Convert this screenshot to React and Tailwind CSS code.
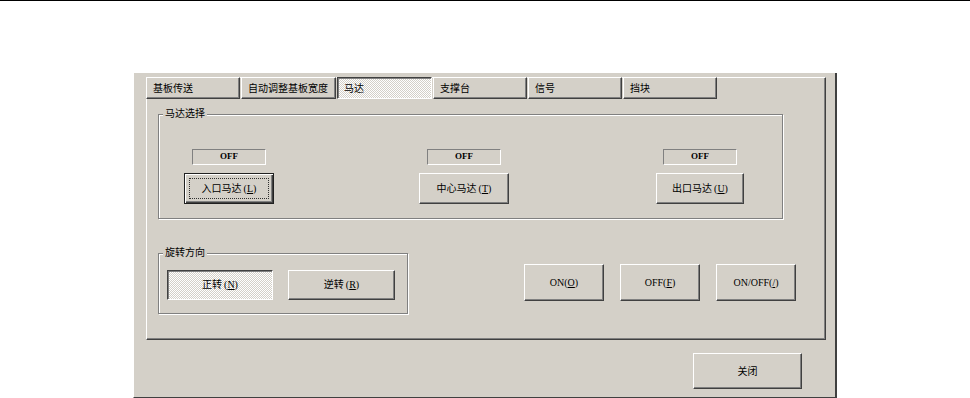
import React from 'react'

const raised =
  'border border-t-white border-l-white border-r-[#404040] border-b-[#404040] shadow-[inset_-1px_-1px_0_#808080]'
const sunken =
  'border border-t-[#404040] border-l-[#404040] border-r-white border-b-white shadow-[inset_1px_1px_0_#808080]'
const dither =
  'bg-[repeating-conic-gradient(#ffffff_0%_25%,#d4d0c8_0%_50%)] bg-[length:2px_2px]'
const font = "font-['Liberation_Serif','Noto_Sans_CJK_SC',serif]"

const tabs = [
  { label: '基板传送', w: 'w-[94px]' },
  { label: '自动调整基板宽度', w: 'w-[95px]' },
  { label: '马达', w: 'w-[95px]', active: true },
  { label: '支撑台', w: 'w-[94px]' },
  { label: '信号', w: 'w-[94px]' },
  { label: '挡块', w: 'w-[94px]' },
]

const Label = ({ text, mn }) => (
  <span className="text-[10px] leading-[12px] text-black whitespace-nowrap">
    {text}
    <span className="ml-[2px]">
      (<u>{mn}</u>)
    </span>
  </span>
)

const GroupBox = ({ title, className, children }) => (
  <div
    className={`relative border border-[#808080] shadow-[inset_1px_1px_0_#ffffff,1px_1px_0_#ffffff] ${className}`}
  >
    <span className="absolute -top-[7px] left-[4px] bg-[#d4d0c8] px-[2px] text-[10px] leading-[12px] text-black">
      {title}
    </span>
    {children}
  </div>
)

const MotorColumn = ({ text, mn, w, focused }) => (
  <div className="flex flex-col items-center">
    <div className="w-[74px] h-[16px] flex items-start justify-center pt-[2px] border border-t-[#808080] border-l-[#808080] border-r-white border-b-white text-[9px] font-bold leading-none">
      OFF
    </div>
    <button
      className={`relative mt-[8px] ${w} h-[31px] flex items-center justify-center ${
        focused
          ? 'border border-[#202020] shadow-[inset_1px_1px_0_#ffffff,inset_-1px_-1px_0_#404040,inset_-2px_-2px_0_#808080]'
          : raised
      }`}
    >
      {focused && (
        <span className="absolute inset-[4px] border border-dotted border-[#303030]" />
      )}
      <Label text={text} mn={mn} />
    </button>
  </div>
)

export default function App() {
  return (
    <div className={`w-[970px] h-[398px] bg-white overflow-hidden border-t border-black ${font}`}>
      <div className="ml-[133px] mt-[72px] w-[704px] h-[325px] bg-[#d4d0c8] border-l border-l-white border-r-2 border-r-[#404040] border-b border-b-[#404040] pt-[4px]">
        {/* tab control */}
        <div className="ml-[12px] w-[680px] h-[263px] border border-t-white border-l-white border-r-[#404040] border-b-[#404040] shadow-[inset_-1px_-1px_0_#808080]">
          <div className="flex gap-px h-[22px] -mt-px -ml-px">
            {tabs.map((t) => (
              <div
                key={t.label}
                className={`${t.w} h-[22px] flex items-center pl-[6px] text-[10px] text-black whitespace-nowrap ${
                  t.active ? `${sunken} ${dither}` : raised
                }`}
              >
                {t.label}
              </div>
            ))}
          </div>

          <GroupBox title="马达选择" className="ml-[11px] mt-[15px] w-[625px] h-[105px]">
            <div className="flex pl-[25px] pt-[34px]">
              <MotorColumn text="入口马达" mn="L" w="w-[90px]" focused />
              <div className="ml-[145px]">
                <MotorColumn text="中心马达" mn="T" w="w-[90px]" />
              </div>
              <div className="ml-[147px]">
                <MotorColumn text="出口马达" mn="U" w="w-[88px]" />
              </div>
            </div>
          </GroupBox>

          <div className="flex mt-[34px] ml-[11px]">
            <GroupBox title="旋转方向" className="w-[250px] h-[61px]">
              <div className="flex gap-[15px] pl-[8px] pt-[16px]">
                <button
                  className={`w-[106px] h-[30px] flex items-center justify-center border border-t-[#404040] border-l-[#404040] border-r-white border-b-white shadow-[inset_1px_1px_0_#808080] ${dither}`}
                >
                  <Label text="正转" mn="N" />
                </button>
                <button className={`w-[107px] h-[30px] flex items-center justify-center ${raised}`}>
                  <Label text="逆转" mn="R" />
                </button>
              </div>
            </GroupBox>

            <div className="flex gap-[16px] ml-[116px] mt-[11px]">
              {[
                ['ON', 'O'],
                ['OFF', 'F'],
                ['ON/OFF', '/'],
              ].map(([t, m]) => (
                <button
                  key={t}
                  className={`w-[80px] h-[37px] flex items-center justify-center text-[10px] text-black ${raised}`}
                >
                  {t}(<u>{m}</u>)
                </button>
              ))}
            </div>
          </div>
        </div>

        <button
          className={`mt-[13px] ml-[559px] w-[109px] h-[36px] flex items-center justify-center text-[10px] text-black ${raised}`}
        >
          关闭
        </button>
      </div>
    </div>
  )
}
